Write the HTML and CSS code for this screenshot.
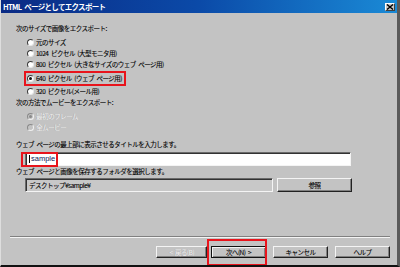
FILE: index.html
```html
<!DOCTYPE html>
<html>

<head>
    <title>HTML ページとしてエクスポート</title>
    <link rel="stylesheet" href="styles.css">
</head>

<body>
    <div class="window">
        <div class="titlebar">
            <span class="title">HTML ページとしてエクスポート</span>
            <span class="close">
                <svg width="8" height="6" viewBox="0 0 8 6">
                    <path d="M1 0.5 L7 5.5 M7 0.5 L1 5.5" stroke="#000" stroke-width="1.4" />
                </svg>
            </span>
        </div>

        <div class="content">
            <div class="label first">次のサイズで画像をエクスポート:</div>
            <div class="options">
                <div class="option"><span class="radio"></span>元のサイズ</div>
                <div class="option"><span class="radio"></span>1024 ピクセル (大型モニタ用)</div>
                <div class="option"><span class="radio"></span>800 ピクセル (大きなサイズのウェブ ページ用)</div>
                <div class="option marked-row"><span class="marked"><span class="radio checked"></span>640 ピクセル (ウェブ ページ用)</span></div>
                <div class="option after-marked"><span class="radio"></span>320 ピクセル(メール用)</div>
            </div>

            <div class="label">次の方法でムービーをエクスポート:</div>
            <div class="options">
                <div class="option disabled first-disabled"><span class="radio checked"></span>最初のフレーム</div>
                <div class="option disabled"><span class="radio"></span>全ムービー</div>
            </div>

            <div class="label title-label">ウェブ ページの最上部に表示させるタイトルを入力します。</div>
            <div class="field text-field">
                <span class="caret"></span>sample
                <span class="mark-sample"></span>
            </div>

            <div class="label">ウェブ ページと画像を保存するフォルダを選択します。</div>
            <div class="folder-row">
                <div class="field folder-field">デスクトップ¥sample¥</div>
                <div class="button browse">参照</div>
            </div>

            <div class="separator"></div>

            <div class="buttons">
                <div class="button disabled back">&lt; 戻る(B)</div>
                <div class="button default">次へ(N) &gt;<span class="mark-next"></span></div>
                <div class="button">キャンセル</div>
                <div class="button">ヘルプ</div>
            </div>
        </div>
    </div>
</body>

</html>
```

FILE: styles.css
```css
body {
    margin: 0;
    background-color: #c0c0c0;
}

.window {
    width: 400px;
    height: 267px;
    box-sizing: border-box;
    background-color: #c3c3c3;
    border-left: 1px solid #dedede;
    border-right: 3px solid #5a5a5a;
    border-bottom: 2px solid #111;
    font-family: "Noto Sans CJK JP", "Liberation Sans", sans-serif;
    font-size: 6.5px;
    letter-spacing: -0.5px;
    word-spacing: 1.5px;
    color: #000;
    -webkit-text-stroke: 0.1px #000;
    overflow: hidden;
}

.titlebar {
    height: 13px;
    display: flex;
    align-items: center;
    justify-content: space-between;
    padding: 0 2px 0 2px;
    background: linear-gradient(to right, #0a2a84, #0b4aa8 50%, #1a8ad6);
}

.title {
    color: #fff;
    font-weight: bold;
    font-size: 7.5px;
    letter-spacing: -0.7px;
    word-spacing: 2px;
    -webkit-text-stroke: 0;
}

.close {
    width: 10px;
    height: 8px;
    box-sizing: border-box;
    display: flex;
    align-items: center;
    justify-content: center;
    background-color: #c8c8c8;
    border: 1px solid;
    border-color: #fff #404040 #404040 #fff;
}

.content {
    padding: 0 7px 0 9px;
}

.label {
    margin-left: 6px;
    line-height: 11px;
    height: 11px;
}

.label.first {
    margin-top: 10px;
    margin-bottom: 3px;
}

.options {
    padding-left: 17px;
}

.option {
    display: flex;
    align-items: center;
    height: 11px;
    line-height: 11px;
    white-space: pre;
}

.marked-row {
    margin-top: 3px;
}

.after-marked {
    margin-top: 2px;
}

.first-disabled {
    margin-top: 3px;
}

.marked {
    display: inline-flex;
    align-items: center;
    padding: 0 2px 0 1px;
    margin-left: -1px;
    outline: 2px solid #e8141c;
    outline-offset: 0;
}

.radio {
    width: 7px;
    height: 7px;
    box-sizing: border-box;
    border-radius: 50%;
    background-color: #fff;
    border: 1px solid;
    border-color: #3a3a3a #e8e8e8 #e8e8e8 #3a3a3a;
    margin-right: 2px;
    display: flex;
    align-items: center;
    justify-content: center;
}

.radio.checked::after {
    content: "";
    width: 3px;
    height: 3px;
    border-radius: 50%;
    background-color: #111;
}

.disabled {
    color: #f4f4f4;
    -webkit-text-stroke: 0;
    text-shadow: -0.5px -0.5px 0 #9a9a9a;
}

.option.disabled .radio {
    background-color: #c3c3c3;
    border-color: #8a8a8a #f0f0f0 #f0f0f0 #8a8a8a;
}

.option.disabled .radio.checked::after {
    background-color: #8a8a8a;
}

.title-label {
    margin-top: 6px;
}

.field {
    height: 14px;
    box-sizing: border-box;
    border: 1px solid;
    border-color: #6a6a6a #f4f4f4 #f4f4f4 #6a6a6a;
    box-shadow: inset 1px 1px 0 #333;
    display: flex;
    align-items: center;
    padding-left: 3px;
    line-height: 12px;
}

.text-field {
    position: relative;
    margin: 2px 0 0 15px;
    width: 326px;
    background-color: #fff;
    font-family: "Liberation Sans", sans-serif;
    font-size: 7.5px;
    letter-spacing: 0;
    color: #10205a;
    -webkit-text-stroke: 0;
}

.caret {
    width: 1px;
    height: 8px;
    background-color: #000;
    margin-right: 1px;
}

.mark-sample {
    position: absolute;
    left: -5px;
    top: -1px;
    width: 33px;
    height: 11px;
    border: 2px solid #e8141c;
}

.folder-row {
    display: flex;
    align-items: center;
    gap: 4px;
    margin: 1px 0 0 15px;
}

.folder-field {
    width: 248px;
    background-color: #c8c8c8;
}

.button {
    position: relative;
    height: 12px;
    box-sizing: border-box;
    display: flex;
    align-items: center;
    justify-content: center;
    background-color: #c3c3c3;
    border: 1px solid;
    border-color: #f4f4f4 #222 #222 #f4f4f4;
    box-shadow: inset -1px -1px 0 #808080;
    line-height: 10px;
}

.browse {
    width: 75px;
    height: 14px;
}

.separator {
    margin-top: 44px;
    height: 1px;
    background-color: #808080;
    border-bottom: 1px solid #f4f4f4;
}

.buttons {
    display: flex;
    justify-content: flex-end;
    gap: 7px;
    margin-top: 8px;
}

.buttons .button {
    width: 55px;
}

.buttons .button.back {
    width: 51px;
    margin-right: -3px;
}

.button.default {
    border-color: #111;
    box-shadow: inset 1px 1px 0 #f4f4f4, inset -1px -1px 0 #808080;
}

.mark-next {
    position: absolute;
    left: -5px;
    right: -2px;
    top: -8px;
    bottom: -9px;
    border: 2px solid #e8141c;
}
```
